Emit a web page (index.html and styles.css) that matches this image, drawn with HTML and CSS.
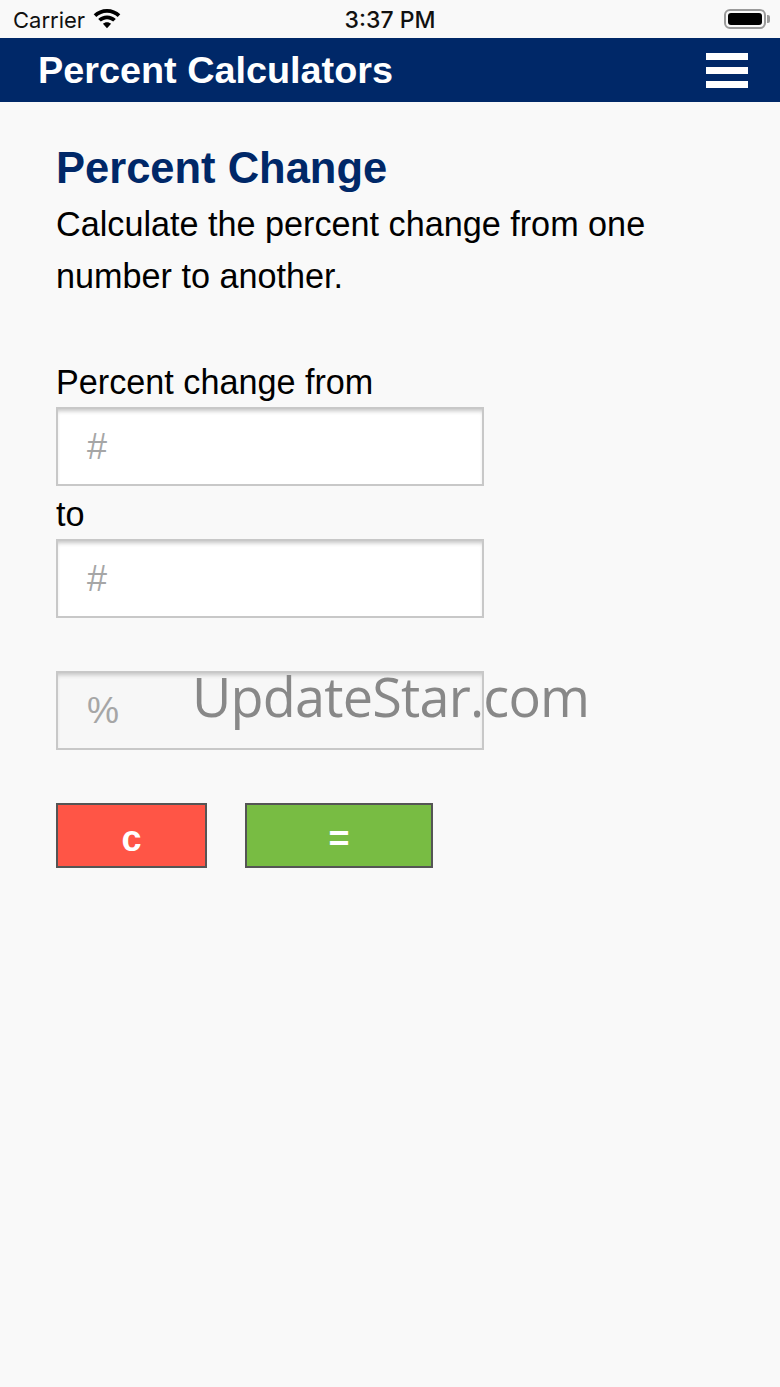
FILE: index.html
```html
<!DOCTYPE html>
<html lang="en">
<head>
<meta charset="utf-8">
<title>Percent Calculators</title>
<link rel="stylesheet" href="styles.css">
</head>
<body>
<div class="status">
  <div class="status-left">
    <span>Carrier</span>
    <svg class="wifi" width="28" height="20" viewBox="0 0 28 20"><path d="M14 3.800c4.200 0 8 1.600 10.700 4.200l2.600-2.700C23.800 2 19.100 0 14 0S4.200 2 .7 5.300L3.300 8C6 5.400 9.800 3.800 14 3.800z" fill="#000"/><path d="M14 10.200c2.400 0 4.500.9 6.200 2.400l2.600-2.700C20.500 7.800 17.400 6.500 14 6.500s-6.500 1.300-8.800 3.400l2.600 2.700c1.700-1.500 3.800-2.400 6.200-2.400z" fill="#000"/><path d="M14 13.200c-1.600 0-3 .6-4.100 1.600L14 19.200l4.100-4.400c-1.100-1-2.500-1.600-4.100-1.600z" fill="#000"/></svg>
  </div>
  <div class="status-time">3:37 PM</div>
  <div class="battery"><div class="battery-body"><div class="battery-fill"></div></div><div class="battery-cap"></div></div>
</div>
<header class="navbar">
  <div class="brand">Percent Calculators</div>
  <div class="menu"><span></span><span></span><span></span></div>
</header>
<main class="content">
  <h1 class="title">Percent Change</h1>
  <p class="intro">Calculate the percent change from one number to another.</p>
  <label class="label label-first">Percent change from</label>
  <div class="field">#</div>
  <label class="label label-to">to</label>
  <div class="field">#</div>
  <div class="field field-result">%</div>
  <div class="buttons">
    <div class="btn btn-clear">c</div>
    <div class="btn btn-equals">=</div>
  </div>
</main>
<div class="watermark">UpdateStar.com</div>
</body>
</html>
```
FILE: styles.css
```css
* { box-sizing: border-box; }
html, body { margin: 0; padding: 0; }
body {
  width: 780px;
  height: 1387px;
  background: #f9f9f9;
  font-family: "Liberation Sans", Arial, sans-serif;
  color: #000;
  position: relative;
  overflow: hidden;
}
.status {
  height: 38px;
  display: flex;
  align-items: center;
  justify-content: space-between;
  padding: 2px 10px 0 13px;
  position: relative;
  font-family: Inter, "Liberation Sans", sans-serif;
  font-size: 22px;
  color: #111;
}
.status-left { display: flex; align-items: center; gap: 8px; }
.wifi { margin-top: -2px; }
.status-time {
  position: absolute;
  left: 0;
  right: 0;
  text-align: center;
  font-size: 23px;
  font-weight: 500;
  pointer-events: none;
}
.battery { display: flex; align-items: center; gap: 1px; margin-top: -2px; }
.battery-body {
  width: 42px;
  height: 20px;
  border: 2px solid #9a9a9a;
  border-radius: 6px;
  padding: 2px;
}
.battery-fill { width: 100%; height: 100%; background: #000; border-radius: 3px; }
.battery-cap { width: 3px; height: 8px; background: #9a9a9a; border-radius: 0 2px 2px 0; }
.navbar {
  height: 64px;
  background: #002868;
  display: flex;
  align-items: center;
  justify-content: space-between;
  padding: 0 32px 0 38px;
}
.brand { color: #fff; font-size: 37.8px; font-weight: 700; }
.menu { display: flex; flex-direction: column; gap: 7px; }
.menu span { display: block; width: 42px; height: 7px; background: #fff; }
.content { padding: 36px 56px 0; }
.title {
  margin: 0;
  font-size: 43.5px;
  line-height: 60px;
  font-weight: 700;
  color: #002868;
}
.intro {
  margin: 0;
  font-size: 34.2px;
  line-height: 52px;
  width: 640px;
}
.label { display: block; font-size: 34.2px; line-height: 40px; margin-bottom: 5px; }
.label-first { margin-top: 60px; }
.label-to { margin-top: 8px; }
.field {
  width: 428px;
  height: 79px;
  background: #fff;
  border: 2px solid #c8c8c8;
  box-shadow: inset 0 4px 4px -2px #c4c4c4;
  padding: 0 0 0 29px;
  display: flex;
  align-items: center;
  font-size: 36px;
  color: #a6a6a6;
}
.field-result { margin-top: 53px; background: #f7f7f7; }
.buttons { display: flex; gap: 38px; margin-top: 53px; }
.btn {
  height: 65px;
  border: 2px solid #555;
  color: #fff;
  font-size: 36px;
  font-weight: 700;
  padding-top: 6px;
  display: flex;
  align-items: center;
  justify-content: center;
}
.btn-clear { width: 151px; background: #ff5546; }
.btn-equals { width: 188px; background: #78bc43; }
.watermark {
  position: absolute;
  left: 192px;
  top: 658px;
  font-family: "Open Sans", "Noto Sans", sans-serif;
  font-size: 54px;
  letter-spacing: -0.8px;
  line-height: 76px;
  color: #888;
  white-space: nowrap;
}
```
